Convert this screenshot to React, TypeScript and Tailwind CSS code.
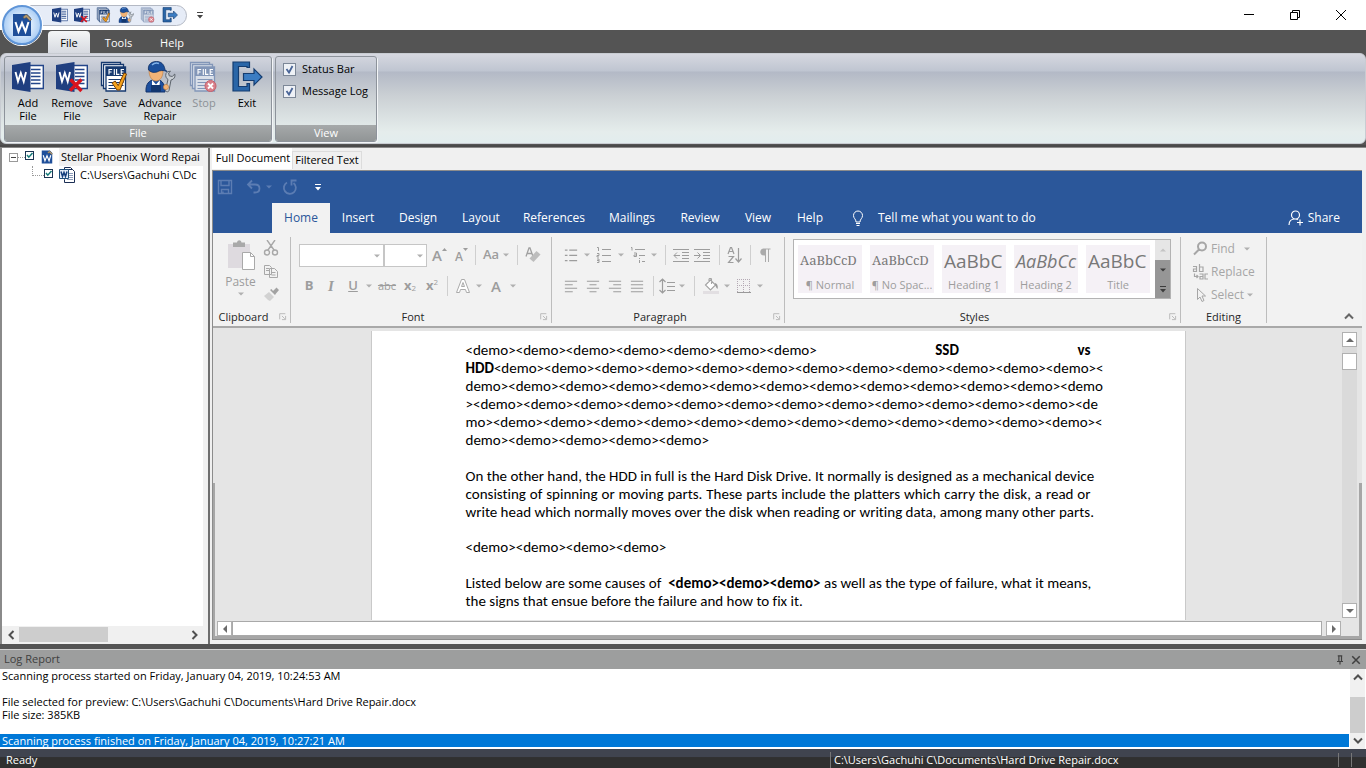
import React from "react";

type SvgProps = { className?: string };

/* ---------- product icons ---------- */

function WordIcon({ className, removed }: SvgProps & { removed?: boolean }) {
  return (
    <svg viewBox="0 0 32 32" className={className} aria-hidden="true">
      <path d="M17 4.500h14.300v23H17z" fill="#fff" stroke="#24468a" strokeWidth="1.4" />
      <path d="M19 8.500h9.500M19 12h9.500M19 15.500h9.500M19 19h9.500M19 22.500h9.500" stroke="#24468a" strokeWidth="1.6" />
      <path d="M0 4 18.500 1v30L0 28z" fill="#203f80" />
      <path d="M3.500 11 6 20.500 8.800 12l2.900 8.500L14 11" fill="none" stroke="#fff" strokeWidth="1.900" />
      {removed && <path d="m14.500 18.500 11 11.500M25.500 18.500 14 29.500" stroke="#d9131d" strokeWidth="3.4" />}
    </svg>
  );
}

function FileStackIcon({ className, stop }: SvgProps & { stop?: boolean }) {
  const ink = stop ? "#8296b8" : "#16396f";
  const paper = stop ? "#d9dfe9" : "#fff";
  return (
    <svg viewBox="0 0 32 32" className={className} aria-hidden="true">
      <path d="M2.500 1.500h19v23h-19z" fill={paper} stroke={ink} strokeWidth="1.300" />
      <path d="M4.500 3.500h20v24h-20z" fill={paper} stroke={ink} strokeWidth="1.300" />
      <path d="M7 6h19.500v24H7z" fill={paper} stroke={ink} strokeWidth="1.300" />
      <path d="M7 6h19.500v9H7z" fill={ink} />
      <path
        d="M10 13.500V8.500h3.200M10 11h2.600M15.300 8v6M17.600 8v5.400h2.800M25 8.500h-2.800v5H25M22.200 11h2.300"
        fill="none"
        stroke="#fff"
        strokeWidth="1.1"
      />
      <path d="M9.500 18.500h15M9.500 21.500h15M9.500 24.500h15M9.500 27.500h11" stroke={ink} strokeWidth="1.1" />
      {stop ? (
        <>
          <circle cx="22.500" cy="25" r="5.500" fill="#d9808a" stroke="#c4616c" />
          <path d="m20 22.500 5 5m0-5-5 5" stroke="#fff" strokeWidth="1.800" />
        </>
      ) : (
        <path d="m13 22 3.200-2 3 4.500L25 12l2.500 1L21 29h-3z" fill="#f5a21c" stroke="#7a4308" strokeWidth="1" />
      )}
    </svg>
  );
}

function MechanicIcon({ className }: SvgProps) {
  return (
    <svg viewBox="0 0 32 32" className={className} aria-hidden="true">
      <path d="M2 31c-.5-8 3-12 9-12.500s10 3 10 12.500z" fill="#1d4f9e" stroke="#12336b" />
      <path d="m8 19 4 4.500 4-4.500-.5 6H8z" fill="#fff" />
      <path d="M7 24h10v7H7z" fill="#12366f" />
      <path d="M5 9c0 7 3 11 7 11s7-4 7-10z" fill="#f2b377" stroke="#c07c3d" strokeWidth=".6" />
      <path d="M4.500 9C3.500 3 8 .5 12.500.5S20 3 21 8.500l2 2c-4-1.500-7-1.500-10 .5-4 1-6.500 0-8.500-2z" fill="#1b4f9c" stroke="#102e63" strokeWidth=".8" />
      <path d="M8 4c2-2 5-2.300 7-1.500" stroke="#7fb0e8" strokeWidth="1.500" fill="none" />
      <path
        d="M22 12.500c-1 3 .5 5 2 6L21.500 29c0 2 3 2.500 3.500.5L27 19c3-.5 4.500-3 3.800-6l-2.600 2.500-3-.7-.6-2.800 1.900-1.700c-2 0-3.800.7-4.500 2.200z"
        fill="#c9ced4"
        stroke="#5d646c"
        strokeWidth="1"
      />
      <circle cx="22" cy="26" r="2.600" fill="#f2b377" stroke="#c07c3d" strokeWidth=".6" />
    </svg>
  );
}

function ExitIcon({ className }: SvgProps) {
  return (
    <svg viewBox="0 0 32 32" className={className} aria-hidden="true">
      <path d="M2 1h16.500v5.500H16V5.500H7.500v20H16v-3h2.500V30H2z" fill="#2a66a8" stroke="#143c70" strokeWidth="1.200" />
      <path d="M12.500 12.500H23V8l8 8-8 8v-4.500H12.500z" fill="#3b7cc2" stroke="#143c70" strokeWidth="1.200" />
    </svg>
  );
}

function AppBadge({ className }: SvgProps) {
  return (
    <svg viewBox="0 0 20 24" className={className} aria-hidden="true">
      <path d="M1 1h14l4 4v18H1z" fill="#1f4f9a" />
      <path d="m3.500 9 3 9.500L10 10l3.500 8.500 3-9.500" fill="none" stroke="#fff" strokeWidth="2" />
      <path d="m11 4 3-2.500 2 1 3.500 4-1.500 1.500-3.500-3.500L12 5.500z" fill="#b29a72" stroke="#6c5c42" strokeWidth=".6" />
    </svg>
  );
}

function DocxIcon({ className }: SvgProps) {
  return (
    <svg viewBox="0 0 16 16" className={className} aria-hidden="true">
      <path d="M5.500.5h6l2 2v11h-8z" fill="#fff" stroke="#1b2f55" />
      <path d="M7.500 2.500h6l2 2v11h-10v-3" fill="#fff" stroke="#1b2f55" />
      <path d="M10 6.500h4M10 8.500h4M10 10.500h4M8 12.500h6" stroke="#6f83a8" strokeWidth=".8" />
      <path d="M.5 2.500h9v9h-9z" fill="#e6eef8" stroke="#1f4f7a" />
      <path d="m2 4.500 1.500 5L5 5.500l1.500 4 1.500-5" fill="none" stroke="#153f7d" strokeWidth="1.500" />
    </svg>
  );
}

/* ---------- small shared pieces ---------- */

function Caret({ className = "text-[#b0b0b0]" }: SvgProps) {
  return (
    <svg viewBox="0 0 6 4" className={`h-1 w-1.5 shrink-0 ${className}`} aria-hidden="true">
      <path d="M0 .5h6L3 3.500z" fill="currentColor" />
    </svg>
  );
}

function MoreCaret({ className }: SvgProps) {
  return (
    <svg viewBox="0 0 6 7" className={`h-[7px] w-1.5 shrink-0 ${className}`} aria-hidden="true">
      <path d="M0 0h6v1H0zM0 3h6L3 6.500z" fill="currentColor" />
    </svg>
  );
}

function Chevron({ turn, className = "h-2 w-2.5 text-[#505050]" }: { turn: string; className?: string }) {
  return (
    <svg viewBox="0 0 10 8" className={`shrink-0 ${turn} ${className}`} aria-hidden="true">
      <path d="m1 6.500 4-4 4 4" fill="none" stroke="currentColor" strokeWidth="2" />
    </svg>
  );
}

function Triangle({ turn = "" }: { turn?: string }) {
  return (
    <svg viewBox="0 0 8 8" className={`h-2 w-2 shrink-0 ${turn}`} aria-hidden="true">
      <path d="M0 6 4 2l4 4z" fill="#6a6a6a" />
    </svg>
  );
}

function Cell({ w, label, children }: { w: string; label: string; children: React.ReactNode }) {
  return (
    <button type="button" aria-label={label} className={`flex h-6 shrink-0 items-center justify-center ${w}`}>
      {children}
    </button>
  );
}

function Sep({ w }: { w: string }) {
  return (
    <div className={`flex shrink-0 justify-center ${w}`}>
      <div className="h-5 w-px bg-[#cfcfcf]" />
    </div>
  );
}

function Stroke({ d, className = "h-4 w-4", width = 1 }: { d: string; className?: string; width?: number }) {
  return (
    <svg viewBox="0 0 16 16" className={`shrink-0 ${className}`} aria-hidden="true">
      <path d={d} fill="none" stroke="currentColor" strokeWidth={width} />
    </svg>
  );
}

/* ---------- application ribbon ---------- */

const actions = [
  { label: ["Add", "File"], w: "w-[46px]", icon: <WordIcon className="h-8 w-8" /> },
  { label: ["Remove", "File"], w: "w-[42px]", icon: <WordIcon removed className="h-8 w-8" /> },
  { label: ["Save"], w: "w-[44px]", icon: <FileStackIcon className="h-8 w-8" /> },
  { label: ["Advance", "Repair"], w: "w-[46px]", icon: <MechanicIcon className="h-8 w-8" /> },
  { label: ["Stop"], w: "w-[42px]", icon: <FileStackIcon stop className="h-8 w-8" />, off: true },
  { label: ["Exit"], w: "w-[44px]", icon: <ExitIcon className="h-8 w-8" /> },
];

const quick = [
  { name: "Add File", icon: <WordIcon className="h-4 w-4" /> },
  { name: "Remove File", icon: <WordIcon removed className="h-4 w-4" /> },
  { name: "Save", icon: <FileStackIcon className="h-4 w-4" /> },
  { name: "Advance Repair", icon: <MechanicIcon className="h-4 w-4" /> },
  { name: "Stop", icon: <FileStackIcon stop className="h-4 w-4" /> },
  { name: "Exit", icon: <ExitIcon className="h-4 w-4" /> },
];

function TitleBar() {
  return (
    <header className="relative shrink-0">
      <div className="flex h-[30px] items-center bg-white pl-[30px]">
        <div className="flex h-[21px] items-center gap-1.5 rounded-r-full border border-[#b4b9c4] bg-[#e6ecf7] pr-2 pl-[21px]">
          {quick.map((q) => (
            <button key={q.name} type="button" aria-label={q.name}>
              {q.icon}
            </button>
          ))}
        </div>
        <button type="button" aria-label="Customize toolbar" className="ml-2.5">
          <MoreCaret className="text-[#444]" />
        </button>
        <div className="ml-auto flex">
          <button type="button" aria-label="Minimize" className="flex w-[46px] justify-center">
            <Stroke d="M3 7.500h10" />
          </button>
          <button type="button" aria-label="Restore" className="flex w-[46px] justify-center">
            <Stroke d="M3.500 5.500h7v7h-7zM5.500 5.500v-2h7v7h-2" />
          </button>
          <button type="button" aria-label="Close" className="mr-0.5 flex w-[46px] justify-center">
            <Stroke d="m3 3 10 10M13 3 3 13" />
          </button>
        </div>
      </div>
      <nav className="flex h-[23px] items-end bg-[#545454] pl-[48px] text-[11px] text-white">
        <button type="button" className="h-[22px] w-[42px] rounded-t-sm bg-linear-to-b from-[#f4f6f6] to-[#d6d9e0] pt-0.5 text-black">
          File
        </button>
        <button type="button" className="h-[22px] w-[57px] pt-0.5">Tools</button>
        <button type="button" className="h-[22px] w-[50px] pt-0.5">Help</button>
      </nav>
      <button
        type="button"
        aria-label="Application menu"
        className="absolute top-[5px] left-0.5 flex h-10 w-10 items-center justify-center rounded-full border-2 border-[#5f95d8] bg-radial from-[#e4f0fd] from-30% to-[#86b7ee] shadow-[0_0_0_1px_#ffffff]"
      >
        <AppBadge className="h-6 w-5" />
      </button>
    </header>
  );
}

function Toggle({ label }: { label: string }) {
  return (
    <label className="flex h-[22px] items-center gap-1.5">
      <span className="relative flex">
        <input
          type="checkbox"
          defaultChecked
          className="peer h-[13px] w-[13px] appearance-none border border-[#7c8797] bg-[#eef1f6]"
        />
        <svg viewBox="0 0 13 13" className="absolute inset-0 hidden h-[13px] w-[13px] peer-checked:block" aria-hidden="true">
          <path d="m3.500 6 2.500 3.500L9.500 3" fill="none" stroke="#4a6597" strokeWidth="1.800" />
        </svg>
      </span>
      {label}
    </label>
  );
}

function RibbonPanel({ title, children }: { title: string; children: React.ReactNode }) {
  return (
    <section className="flex flex-col overflow-hidden rounded-[3px] border border-[#8d939b] shadow-[1px_1px_0_#f3f5f7]">
      <div className="flex-1">{children}</div>
      <h2 className="h-4 bg-linear-to-b from-[#a6a9aa] to-[#919596] text-center text-[11px] leading-4 text-white">{title}</h2>
    </section>
  );
}

function AppRibbon() {
  return (
    <div className="shrink-0 border-b-2 border-[#4a4a4a] bg-[#545454] pb-px">
      <div className="flex h-[91px] gap-[3px] rounded-md border border-[#c8ccd2] bg-[linear-gradient(#d6d8e0_0,#bfc5d1_17px,#b3b9c6_18px,#cbd0d4_42px,#e5edec_78px,#e2edee_100%)] pt-[2px] pb-px pl-[3px] text-[11px]">
        <RibbonPanel title="File">
          <div className="flex pt-1 pr-0.5">
            {actions.map((a) => (
              <button
                key={a.label[0]}
                type="button"
                disabled={a.off}
                className={`flex flex-col items-center whitespace-nowrap ${a.w} ${a.off ? "text-[#8c9196]" : "text-black"}`}
              >
                {a.icon}
                <span className="flex flex-col items-center pt-[3px] leading-[13px]">
                  {a.label.map((line) => (
                    <span key={line}>{line}</span>
                  ))}
                </span>
              </button>
            ))}
          </div>
        </RibbonPanel>
        <RibbonPanel title="View">
          <div className="flex flex-col pt-px pr-2 pl-[7px]">
            <Toggle label="Status Bar" />
            <Toggle label="Message Log" />
          </div>
        </RibbonPanel>
      </div>
    </div>
  );
}

/* ---------- file tree ---------- */

function TreeCheck({ label }: { label: string }) {
  return (
    <span className="relative mb-1 flex shrink-0">
      <input type="checkbox" aria-label={label} defaultChecked className="peer h-[9px] w-[9px] appearance-none border border-[#1c3554] bg-white" />
      <svg viewBox="0 0 9 9" className="absolute inset-0 hidden h-[9px] w-[9px] peer-checked:block" aria-hidden="true">
        <path d="m2 4 1.800 2.200L7.500 2" fill="none" stroke="#157a78" strokeWidth="1.500" />
      </svg>
    </span>
  );
}

function FileTree() {
  return (
    <aside className="flex w-[208px] shrink-0 border-l-2 border-[#8a8a8a] bg-[#f0f0f0] pr-[5px] pb-px">
      <div className="flex min-w-0 flex-1 flex-col overflow-hidden bg-white text-[11px]">
        <div className="flex h-[18px] items-center pl-[7px]">
          <button type="button" aria-label="Collapse" className="flex h-[9px] w-[9px] shrink-0 items-center justify-center border border-[#9a9a9a]">
            <span className="h-px w-[5px] bg-[#444]" />
          </button>
          <span className="w-[7px] shrink-0 border-t border-dotted border-[#9a9a9a]" />
          <TreeCheck label="Stellar Phoenix Word Repair" />
          <AppBadge className="ml-[7px] h-3.5 w-3 shrink-0" />
          <span className="ml-1.5 flex-1 bg-[#f0f0f0] pl-0.5 leading-[18px] whitespace-nowrap">Stellar Phoenix Word Repai</span>
        </div>
        <div className="flex h-[18px] items-center pl-[30px]">
          <span className="mb-2 h-[10px] w-3 shrink-0 border-b border-l border-dotted border-[#9a9a9a]" />
          <TreeCheck label="Hard Drive Repair.docx" />
          <DocxIcon className="ml-1.5 h-4 w-4 shrink-0" />
          <span className="ml-[5px] whitespace-nowrap">C:\Users\Gachuhi C\Dc</span>
        </div>
        <div className="mt-auto flex h-[17px] items-center bg-[#f0f0f0]">
          <button type="button" aria-label="Scroll left" className="flex w-[17px] justify-center">
            <Chevron turn="-rotate-90" />
          </button>
          <div className="h-[15px] w-[89px] bg-[#cdcdcd]" />
          <button type="button" aria-label="Scroll right" className="ml-auto flex w-[17px] justify-center">
            <Chevron turn="rotate-90" />
          </button>
        </div>
      </div>
    </aside>
  );
}

/* ---------- document preview ---------- */

const wordTabs = [
  { name: "Insert", w: "w-14" },
  { name: "Design", w: "w-16" },
  { name: "Layout", w: "w-[62px]" },
  { name: "References", w: "w-[84px]" },
  { name: "Mailings", w: "w-[72px]" },
  { name: "Review", w: "w-16" },
  { name: "View", w: "w-[52px]" },
  { name: "Help", w: "w-[52px]" },
];

function WordHeader() {
  return (
    <div className="shrink-0 bg-[#2b579a] text-white">
      <div className="flex h-8 items-center pl-1">
        <button type="button" aria-label="Save" className="text-[#5c7db3]">
          <Stroke d="M1.500 1.500h13v13h-13zM4 1.500v5h8v-5M4.500 14.500v-4h7v4M6 12.500v2" width={1.400} />
        </button>
        <button type="button" aria-label="Undo" className="ml-[13px] flex items-center gap-1 text-[#5c7db3]">
          <Stroke d="M6 1.500 2 5.500l4 4M2 5.500h7c6 0 6 8 0 8H7.500" width={1.800} />
          <Caret className="text-[#5c7db3]" />
        </button>
        <button type="button" aria-label="Repeat" className="ml-2.5 text-[#5c7db3]">
          <Stroke d="M5 3.500a6 6 0 1 0 6.500.5M14.500 1.500h-5v5" width={1.800} />
        </button>
        <button type="button" aria-label="Customize" className="ml-[17px]">
          <MoreCaret className="text-white" />
        </button>
      </div>
      <nav className="flex h-[30px] items-stretch pl-[59px] text-[12px]">
        <button type="button" className="w-[58px] bg-[#f2f2f2] text-[#2b579a]">Home</button>
        {wordTabs.map((t) => (
          <button key={t.name} type="button" className={t.w}>
            {t.name}
          </button>
        ))}
        <button type="button" className="ml-3.5 flex items-center gap-3">
          <Stroke d="M6 12c0-3-2.500-3.500-2.500-6.500a4.500 4.500 0 0 1 9 0C12.500 8.500 10 9 10 12zM6 13.500h4M6.500 15.500h3" className="h-4 w-4" />
          Tell me what you want to do
        </button>
        <button type="button" className="mr-[22px] ml-auto flex items-center gap-1">
          <Stroke d="M11.500 5a4 4 0 1 1-8 0 4 4 0 0 1 8 0M1 15c0-4 2.500-6 6-6 1.500 0 2.500.3 3 .8M9 12.500h6M12 9.500v6" width={1.200} />
          Share
        </button>
      </nav>
    </div>
  );
}

function Group({ title, w, pad, launcher, children }: { title: string; w: string; pad: string; launcher?: boolean; children: React.ReactNode }) {
  return (
    <section className={`flex h-[86px] shrink-0 flex-col border-r border-[#bdbdbd] ${w}`}>
      <div className={`flex-1 ${pad}`}>{children}</div>
      <div className="flex h-[13px] items-center text-[11px] leading-[13px] text-[#262626]">
        <h3 className={`flex-1 text-center ${launcher ? "pr-1" : ""}`}>{title}</h3>
        {launcher && (
          <button type="button" aria-label={`${title} settings`} className="mr-[3px] text-[#b5b5b5]">
            <Stroke d="M3 13V3h10M7 7l5 5M13.500 7v6.500H7" className="h-[9px] w-[9px]" width={1.600} />
          </button>
        )}
      </div>
    </section>
  );
}

const alignments = [
  { name: "Align left", d: "M1 2.500h14M1 6.500h9M1 10.500h14M1 14.500h9" },
  { name: "Center", d: "M1 2.500h14M4 6.500h8M1 10.500h14M4 14.500h8" },
  { name: "Align right", d: "M1 2.500h14M6 6.500h9M1 10.500h14M6 14.500h9" },
  { name: "Justify", d: "M1 2.500h14M1 6.500h14M1 10.500h14M1 14.500h14" },
];

const styles = [
  { name: "¶ Normal", face: "font-['Noto_Serif','DejaVu_Serif',serif] text-[13px]", sample: "AaBbCcD" },
  { name: "¶ No Spac...", face: "font-['Noto_Serif','DejaVu_Serif',serif] text-[13px]", sample: "AaBbCcD" },
  { name: "Heading 1", face: "text-[19px]", sample: "AaBbC" },
  { name: "Heading 2", face: "text-[18px] italic", sample: "AaBbCc" },
  { name: "Title", face: "text-[19px]", sample: "AaBbC" },
];

function FontSelect({ label, w }: { label: string; w: string }) {
  return (
    <span className="relative flex">
      <select aria-label={label} className={`h-[23px] appearance-none border border-[#c6c6c6] bg-white ${w}`} />
      <span className="pointer-events-none absolute top-2.5 right-1">
        <Caret />
      </span>
    </span>
  );
}

function WordRibbon() {
  return (
    <div className="flex h-[95px] shrink-0 border-b-2 border-[#a9a9a9] bg-[#f2f2f2] pt-1 text-[#9d9d9d]">
      <Group title="Clipboard" w="w-[78px]" pad="pl-[13px] pt-[3px]" launcher>
        <div className="flex">
          <button type="button" className="flex w-[29px] flex-col items-center text-[12px] leading-4">
            <svg viewBox="0 0 28 32" className="h-8 w-7" aria-hidden="true">
              <path d="M1 4h22v24H1z" fill="#dedadf" />
              <path d="M6 2.500h4c.5-3 4-3 4.500 0H18V7H6z" fill="#a9a9a9" />
              <path d="M15.500 12.500h8l4 4v13h-12z" fill="#fff" stroke="#a9a9a9" />
              <path d="M23.500 12.500v4h4" fill="none" stroke="#a9a9a9" />
            </svg>
            <span className="pt-0.5">Paste</span>
            <span className="pt-0.5"><Caret /></span>
          </button>
          <div className="ml-2 flex flex-col gap-[7px] text-[#a8a8a8]">
            <button type="button" aria-label="Cut">
              <Stroke d="m4 0 7 10M12 0 5 10M6.500 12.500a2.500 2.500 0 1 1-5 0 2.500 2.500 0 0 1 5 0M14.500 12.500a2.500 2.500 0 1 1-5 0 2.500 2.500 0 0 1 5 0" width={1.400} />
            </button>
            <button type="button" aria-label="Copy">
              <Stroke d="M1.500 11.500v-9h5l2 2v7zM3 5.500h3M3 7.500h3M6.500 14.500v-9h5l3 3v6zM8.500 9.500h4M8.500 12h4" />
            </button>
            <button type="button" aria-label="Format painter">
              <svg viewBox="0 0 16 16" className="h-4 w-4" aria-hidden="true">
                <path d="m1 10 5-4 5 5-4 4-2-1z" fill="#d2d2d2" />
                <path d="m7 4 5 5 1-1.500L16 4l-2.500-2.500L10 5 8.500 3z" fill="#a2a2a2" />
              </svg>
            </button>
          </div>
        </div>
      </Group>

      <Group title="Font" w="w-[261px]" pad="pl-2 pt-[6px]" launcher>
        <div className="flex h-6 items-center">
          <FontSelect label="Font" w="w-[85px]" />
          <FontSelect label="Font size" w="w-[43px]" />
          <Cell w="w-[25px]" label="Grow font">
            <span className="text-[15px] font-semibold">A</span>
            <svg viewBox="0 0 5 3" className="mb-3 h-[3px] w-[5px]" aria-hidden="true"><path d="M0 3h5L2.500 0z" fill="currentColor" /></svg>
          </Cell>
          <Cell w="w-[19px]" label="Shrink font">
            <span className="pt-1 text-[12px] font-semibold">A</span>
            <svg viewBox="0 0 5 3" className="mb-3 h-[3px] w-[5px]" aria-hidden="true"><path d="M0 0h5L2.500 3z" fill="currentColor" /></svg>
          </Cell>
          <Sep w="w-2" />
          <Cell w="w-[34px]" label="Change case">
            <span className="pr-1 text-[13px] font-semibold">Aa</span>
            <Caret />
          </Cell>
          <Sep w="w-2" />
          <Cell w="w-6" label="Clear formatting">
            <svg viewBox="0 0 16 16" className="h-4 w-4" aria-hidden="true">
              <path d="M1 9.500 4 1h1l3 8.500M2.500 6.500h4" fill="none" stroke="#a0a0a0" strokeWidth="1.300" />
              <path d="m4.500 11.500 7-7.500 4 3.500-7 7.500z" fill="#bdbdbd" />
            </svg>
          </Cell>
        </div>
        <div className="mt-[7px] flex h-6 items-center text-[13px]">
          <Cell w="w-5" label="Bold"><b>B</b></Cell>
          <Cell w="w-6" label="Italic"><i className="font-['Liberation_Serif',serif] text-[15px] font-bold">I</i></Cell>
          <Cell w="w-5" label="Underline"><u className="font-semibold">U</u></Cell>
          <Cell w="w-3" label="Underline options"><Caret /></Cell>
          <Cell w="w-6" label="Strikethrough"><s className="text-[11px]">abc</s></Cell>
          <Cell w="w-[22px]" label="Subscript"><b>x</b><sub className="text-[8px]">2</sub></Cell>
          <Cell w="w-[22px]" label="Superscript"><b>x</b><sup className="text-[8px]">2</sup></Cell>
          <Sep w="w-2" />
          <Cell w="w-6" label="Text effects">
            <svg viewBox="0 0 16 16" className="h-4 w-4" aria-hidden="true">
              <path d="M1.500 14.500 6.500 1.500h3l5 13h-3l-1-3h-5l-1 3zM6.500 8.500h3L8 4.500z" fill="#fff" stroke="#ababab" />
            </svg>
          </Cell>
          <Cell w="w-2" label="Text effects options"><Caret /></Cell>
          <Cell w="w-[26px]" label="Font color"><span className="text-[15px] font-semibold">A</span></Cell>
          <Cell w="w-2" label="Font color options"><Caret /></Cell>
        </div>
      </Group>

      <Group title="Paragraph" w="w-[233px]" pad="pl-2 pt-[6px]" launcher>
        <div className="flex h-6 items-center">
          <Cell w="w-[22px]" label="Bullets"><Stroke d="M1 2.500h3M1 8.500h3M1 14.500h3M6 2.500h9M6 8.500h9M6 14.500h9" className="h-3.5 w-3.5" width={1.300} /></Cell>
          <Cell w="w-2.5" label="Bullet options"><Caret /></Cell>
          <Cell w="w-6" label="Numbering"><Stroke d="M1 .5h1.500V4M1 6.500h2v2H1v1.500h2M1 12h2v3.500H1M1 13.500h2M6 2.500h9M6 8.500h9M6 14.500h9" className="h-4 w-4" /></Cell>
          <Cell w="w-2.5" label="Numbering options"><Caret /></Cell>
          <Cell w="w-6" label="Multilevel list"><Stroke d="M1 .5h1v3M5 2.500h10M4 6h2.500v3.500H4V8h2.500M9 8.500h6M9.500 11v1M9.500 13v3M12 14.500h3" /></Cell>
          <Cell w="w-2" label="Multilevel options"><Caret /></Cell>
          <Sep w="w-3.5" />
          <Cell w="w-[18px]" label="Decrease indent"><Stroke d="M0 2.500h16M9 5.500h7M9 8.500h7M9 11.500h7M0 14.500h16M1 8.500h6M4 5.500l-3 3 3 3" /></Cell>
          <Cell w="w-6" label="Increase indent"><Stroke d="M0 2.500h16M9 5.500h7M9 8.500h7M9 11.500h7M0 14.500h16M0 8.500h6M3.500 5.500l3 3-3 3" /></Cell>
          <Sep w="w-2.5" />
          <Cell w="w-[22px]" label="Sort"><Stroke d="M1 7 3.500.5h1L7 7M2 4.500h4M1.500 9.500h5l-5 6h5M11.500 1v14M8.500 11.500l3 3.500 3-3.500" width={1.200} /></Cell>
          <Sep w="w-2" />
          <Cell w="w-[22px]" label="Show marks">
            <svg viewBox="0 0 12 14" className="h-3.5 w-3" aria-hidden="true">
              <path d="M5 7.500C0 7.500 0 .5 5 .5h6.500v1H10V14H9V1.500H7V14H6V7.500z" fill="#ababab" />
            </svg>
          </Cell>
        </div>
        <div className="mt-[7px] flex h-6 items-center">
          {alignments.map((a) => (
            <Cell key={a.name} w="w-[22px]" label={a.name}><Stroke d={a.d} className="h-3.5 w-3.5" width={1.200} /></Cell>
          ))}
          <Sep w="w-2.5" />
          <Cell w="w-[18px]" label="Line spacing"><Stroke d="M3.500 1v14M.5 4l3-3 3 3M.5 12l3 3 3-3M8 4.500h8M8 8.500h8M8 12.500h8" width={1.200} /></Cell>
          <Cell w="w-3" label="Line spacing options"><Caret /></Cell>
          <Sep w="w-3" />
          <Cell w="w-[22px]" label="Shading">
            <svg viewBox="0 0 16 16" className="h-4 w-4" aria-hidden="true">
              <path d="m2.500 7 5-5 5 5-5 5zM6 4V1.500C6 0 8.500 0 8.500 1.500V6" fill="#fff" stroke="#a3a3a3" strokeWidth="1.100" />
              <path d="M12 5c3 1 3 4 2.500 6-1-1-1.500-2-2.500-4z" fill="#9a9a9a" />
              <path d="M0 13h16v3H0z" fill="#e2dfe2" />
            </svg>
          </Cell>
          <Cell w="w-2.5" label="Shading options"><Caret /></Cell>
          <Cell w="w-6" label="Borders">
            <svg viewBox="0 0 14 14" className="h-3.5 w-3.5" aria-hidden="true">
              <path d="M0 .5h14M0 6.500h14M.5 0v14M6.500 0v14M12.500 0v14" stroke="#b4a9b4" strokeDasharray="1 1" fill="none" />
              <path d="M0 13.500h14" stroke="#999" />
            </svg>
          </Cell>
          <Cell w="w-2" label="Border options"><Caret /></Cell>
        </div>
      </Group>

      <Group title="Styles" w="w-[396px]" pad="pl-2 pt-0.5" launcher>
        <div className="flex h-[60px] w-[378px] border border-[#b3b3b3] bg-white">
          <div className="flex flex-1 gap-2 py-[5px] pl-1">
            {styles.map((s) => (
              <button key={s.name} type="button" className="flex h-12 w-16 flex-col bg-[#f5f1f6]">
                <span className={`flex h-8 w-full items-center pl-0.5 whitespace-nowrap text-[#787878] ${s.face}`}>
                  {s.sample}
                </span>
                <span className="w-full text-center text-[11px] leading-4 whitespace-nowrap">{s.name}</span>
              </button>
            ))}
          </div>
          <div className="flex w-[15px] flex-col bg-[#969696]">
            <button type="button" aria-label="Previous styles" className="flex h-5 items-center justify-center bg-[#e6e6e6]">
              <Caret className="rotate-180 text-[#c4c4c4]" />
            </button>
            <button type="button" aria-label="Next styles" className="flex h-5 items-center justify-center">
              <Caret className="text-[#3c3c3c]" />
            </button>
            <button type="button" aria-label="More styles" className="flex flex-1 items-center justify-center">
              <MoreCaret className="text-[#3c3c3c]" />
            </button>
          </div>
        </div>
      </Group>

      <Group title="Editing" w="w-[86px]" pad="pl-[11px]">
        <div className="flex flex-col text-[12px] text-[#a6a6a6]">
          <button type="button" className="flex h-[23px] items-center gap-[3px]">
            <Stroke d="M14 5.500a4 4 0 1 1-8 0 4 4 0 0 1 8 0M7 8.500l-5 5" width={2} />
            Find
            <span className="pl-1.5"><Caret /></span>
          </button>
          <button type="button" className="flex h-[23px] items-center gap-[3px]">
            <svg viewBox="0 0 16 16" className="h-4 w-4" aria-hidden="true">
              <path
                d="M1 2.500h3.500v5H1.500v-2.500h3M7.500 0v7.500H11v-4.500H7.500M2.500 9.500v3h3M4.500 11l1.500 1.500L4.500 14M7.500 10H11v5H8v-2.500h3M16 10h-3v5h3"
                fill="none"
                stroke="currentColor"
                strokeWidth="1.200"
              />
            </svg>
            Replace
          </button>
          <button type="button" className="flex h-[23px] items-center gap-[3px]">
            <Stroke d="M5.500 1.500v11l2.500-2.500 2 4.500 2-1-2-4.500h3.500z" />
            Select
            <Caret />
          </button>
        </div>
      </Group>

      <button type="button" aria-label="Collapse ribbon" className="mr-2 mb-1.5 ml-auto self-end">
        <Chevron turn="" className="h-2 w-2.5 text-[#666]" />
      </button>
    </div>
  );
}

const demo = (n: number) => "<demo>".repeat(n);

function Line({ last, children }: { last?: boolean; children: React.ReactNode }) {
  return <span className={`block whitespace-nowrap ${last ? "" : "text-justify [text-align-last:justify]"}`}>{children}</span>;
}

function DocumentPage() {
  return (
    <article className="mt-[3px] w-[815px] shrink-0 border-x border-[#c9c9c9] bg-white px-[94px] pt-2.5 font-[Carlito,Lato,'Noto_Sans',sans-serif] text-[15px] leading-[18px] text-black [font-variant-ligatures:none]">
      <p>
        <span className="flex justify-between">
          <span>{demo(7)}</span>
          <b>SSD</b>
          <b>vs</b>
        </span>
        <Line last><b>HDD</b>{demo(12)}&lt;</Line>
        <Line last>demo&gt;{demo(11)}&lt;demo</Line>
        <Line last>&gt;{demo(12)}&lt;de</Line>
        <Line last>mo&gt;{demo(12)}&lt;</Line>
        <Line last>demo&gt;{demo(4)}</Line>
      </p>
      <p className="pt-[18px]">
        <Line>On the other hand, the HDD in full is the Hard Disk Drive. It normally is designed as a mechanical device</Line>
        <Line>consisting of spinning or moving parts. These parts include the platters which carry the disk, a read or</Line>
        <Line last>write head which normally moves over the disk when reading or writing data, among many other parts.</Line>
      </p>
      <p className="pt-[17px]">{demo(4)}</p>
      <p className="pt-[18px]">
        <Line>Listed below are some causes of&nbsp; <b>{demo(3)}</b> as well as the type of failure, what it means,</Line>
        <Line last>the signs that ensue before the failure and how to fix it.</Line>
      </p>
    </article>
  );
}

const boxButton = "flex h-[15px] w-[15px] shrink-0 items-center justify-center border border-[#b0b0b0] bg-white";

function Preview() {
  return (
    <main className="flex min-w-0 flex-1 flex-col border-l-2 border-[#6e6e6e] bg-[#f0f0f0] pr-1 pb-1 pl-[2px]">
      <div className="flex h-[22px] shrink-0 items-start text-[11px]">
        <button type="button" className="h-[21px] w-20 bg-white pl-0.5 whitespace-nowrap">Full Document</button>
        <button type="button" className="mt-[3px] h-[18px] w-[70px] border border-b-0 border-[#dcdcdc] whitespace-nowrap">Filtered Text</button>
      </div>
      <div className="relative flex min-h-0 flex-1 flex-col border border-r-0 border-[#8c8c8c] bg-[#e5e5e5]">
        <WordHeader />
        <WordRibbon />
        <div className="flex min-h-0 flex-1 overflow-hidden">
          <div className="flex min-w-0 flex-1 justify-center overflow-hidden pl-px">
            <DocumentPage />
          </div>
          <div className="flex w-[20px] shrink-0 flex-col items-start pt-1 pb-0.5">
            <button type="button" aria-label="Scroll up" className={boxButton}><Triangle /></button>
            <div className="w-[15px] flex-1 bg-[#dadada] pt-1.5">
              <div className="h-[17px] border border-[#b0b0b0] bg-white" />
            </div>
            <button type="button" aria-label="Scroll down" className={boxButton}><Triangle turn="rotate-180" /></button>
          </div>
        </div>
        <div className="flex h-[19px] shrink-0 items-start gap-1 border-b-[3px] border-[#a6a6a6] pt-px pr-[21px] pl-1">
          <div className="flex flex-1">
            <button type="button" aria-label="Scroll left" className={boxButton}><Triangle turn="-rotate-90" /></button>
            <div className="flex-1 border border-[#a9a9a9] bg-white" />
          </div>
          <button type="button" aria-label="Scroll right" className={boxButton}><Triangle turn="rotate-90" /></button>
        </div>
        <div className="absolute bottom-0 left-0 h-1/3 w-0.5 bg-[#a6a6a6]" />
        <div className="absolute right-0 bottom-0 h-1/3 w-[3px] bg-[#a6a6a6]" />
      </div>
    </main>
  );
}

/* ---------- log and status ---------- */

const log = [
  "Scanning process started on Friday, January 04, 2019, 10:24:53 AM",
  "",
  "File selected for preview: C:\\Users\\Gachuhi C\\Documents\\Hard Drive Repair.docx",
  "File size: 385KB",
  "",
];

function LogReport() {
  return (
    <section className="shrink-0 border-t-[5px] border-[#545454] text-[11px]">
      <div className="flex h-5 items-center border-t border-[#d0d0d0] bg-[#9d9e9e] pl-1 text-[#404040]">
        <h2 className="flex-1">Log Report</h2>
        <button type="button" aria-label="Pin" className="mr-1"><Stroke d="M5 2.500h6M6.500 2.500v7M10 2.500v7M4 10h8M8 10v4" className="h-3 w-3" width={1.600} /></button>
        <button type="button" aria-label="Close log" className="mr-1"><Stroke d="m3 3 10 10M13 3 3 13" className="h-3 w-3" width={2} /></button>
      </div>
      <div className="flex h-[80px] bg-white">
        <div className="flex-1 leading-[13px]">
          {log.map((line, i) => (
            <p key={i} className="h-[13px] pl-[2px]">{line}</p>
          ))}
          <p className="h-[13px] bg-[#0078d7] pl-[2px] text-white">Scanning process finished on Friday, January 04, 2019, 10:27:21 AM</p>
        </div>
        <div className="mr-px ml-px flex w-[15px] flex-col items-center bg-[#f0f0f0] py-1">
          <Chevron turn="" />
          <div className="mt-4 mb-1 w-full flex-1 bg-[#cdcdcd]" />
          <Chevron turn="rotate-180" />
        </div>
      </div>
    </section>
  );
}

export default function App() {
  return (
    <div className="flex h-screen flex-col overflow-hidden bg-[#545454] font-['Open_Sans','Noto_Sans',sans-serif] text-black">
      <TitleBar />
      <AppRibbon />
      <div className="flex min-h-0 flex-1 border-t border-[#8a8a8a] bg-[#f0f0f0]">
        <FileTree />
        <Preview />
      </div>
      <LogReport />
      <footer className="flex h-[19px] shrink-0 items-center bg-linear-to-b from-[#40444f] from-40% to-[#303030] to-45% pt-[3px] pr-[14px] pl-1.5 text-[11px] text-white">
        <span className="w-[824px]">Ready</span>
        <span className="flex h-4 flex-1 items-center border-l border-[#777] pl-[3px]">C:\Users\Gachuhi C\Documents\Hard Drive Repair.docx</span>
        <span className="h-3.5 w-3.5 border-x border-[#777]" />
      </footer>
    </div>
  );
}
